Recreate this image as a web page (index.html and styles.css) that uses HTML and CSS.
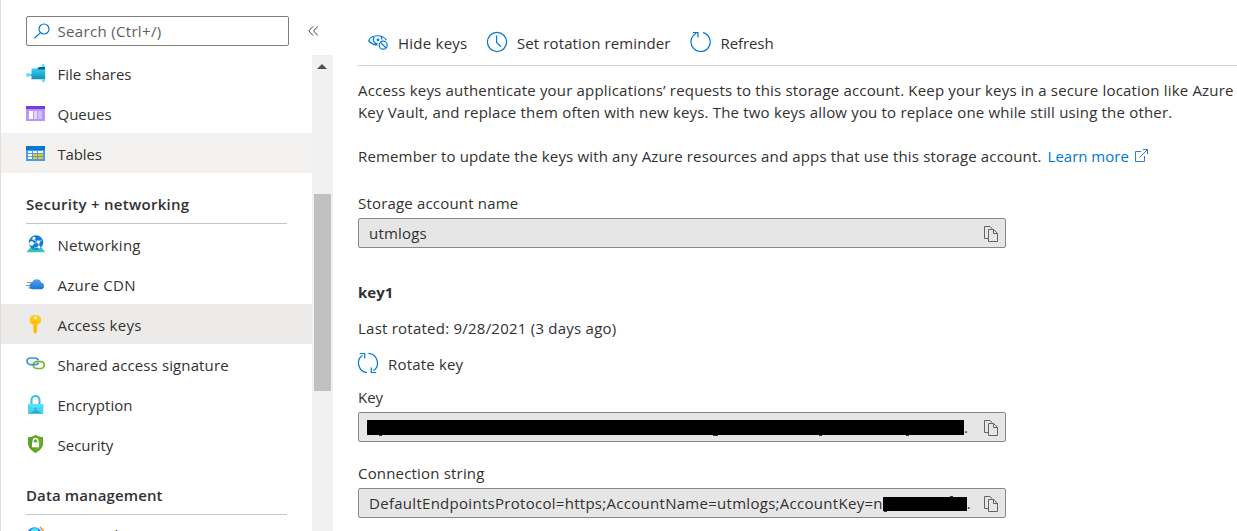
FILE: index.html
```html
<!DOCTYPE html>
<html lang="en">
<head>
<meta charset="utf-8">
<title>Access keys</title>
<link rel="stylesheet" href="styles.css">
</head>
<body>
<svg class="defs" width="0" height="0" aria-hidden="true">
  <defs>
    <linearGradient id="cloud" x1="0" y1="0" x2="0" y2="1"><stop offset="0" stop-color="#5ea0ef"/><stop offset="1" stop-color="#0f78d4"/></linearGradient>
    <linearGradient id="folder" x1="0" y1="0" x2="0" y2="1"><stop offset="0" stop-color="#32d4f5"/><stop offset="1" stop-color="#198ab3"/></linearGradient>
    <symbol id="copy" viewBox="0 0 14 16"><path d="M4.500 12.500h-4V.5h5.300l2.400 2.200M4.500 3.500h5.200l3.800 3.800v8.200h-9zM9.500 3.500v4h4" fill="none" stroke="#66635f"/></symbol>
  </defs>
</svg>
<div class="app">
  <aside class="sidebar">
    <div class="search-row">
      <div class="search">
        <svg width="16" height="16" viewBox="0 0 16 16" fill="none" stroke="#0078d4" stroke-width="1.200"><circle cx="10" cy="6" r="5"/><path d="M6.400 9.600L.5 15.200"/></svg>
        <span class="t-search">Search (Ctrl+/)</span>
      </div>
      <svg class="collapse" width="11" height="10" viewBox="0 0 11 10" fill="none" stroke="#444" stroke-width="1"><path d="M5 .4L.8 4.900 5 9.500M9.800.4L5.600 4.900l4.200 4.600"/></svg>
    </div>
    <div class="scroller">
      <nav class="menu">
        <a class="item"><svg width="20" height="20" viewBox="0 0 20 20"><path d="M2 12h5M14 7l4-5M15 14l3 3" stroke="#0078d4"/><path d="M11 6l2-2h6v5h-8z" fill="#0a5ea8"/><path d="M5.500 5.500h5l1.500 1h7.200v9.800H5.500z" fill="url(#folder)"/><g fill="#50e6ff"><circle cx="2" cy="12" r="1.900"/><circle cx="17.200" cy="2.500" r="1.500"/><circle cx="17.500" cy="17.500" r="1.700"/></g></svg><span>File shares</span></a>
        <a class="item"><svg width="20" height="20" viewBox="0 0 20 20"><path d="M0 3h19v15H0z" fill="#b796f9"/><path d="M0 3h19v3H0z" fill="#773adc"/><path d="M3 8h4v8H3z" fill="#fff"/><path d="M8 8h3v8H8z" fill="#e5d7fd"/><path d="M12 8h4v8h-4z" fill="#d3bffc"/></svg><span>Queues</span></a>
        <a class="item hover"><svg width="20" height="20" viewBox="0 0 20 20"><path d="M0 3h19v15H0z" fill="#4a9ae9"/><path d="M0 3h19v4H0z" fill="#0078d4"/><path d="M2 8h4v2H2zM7 8h4v2H7zM12 8h5v2h-5zM2 11h4v2H2zM2 14h4v2H2z" fill="#fff"/><path d="M7 11h4v2H7zM12 11h5v2h-5zM7 14h4v2H7zM12 14h5v2h-5z" fill="#f2c80f"/></svg><span class="tighter">Tables</span></a>
        <h2 class="group"><span class="t-sec">Security + networking</span></h2>
        <a class="item"><svg width="20" height="20" viewBox="0 0 20 20"><path d="M4 14h12l3.200 4.200H.3z" fill="#32c8ae"/><circle cx="10" cy="8.600" r="7.300" fill="#137ad6"/><path d="M5.500 5l7 3 3.500-2M6 10l6.500-2 .5 6M8 14l5-1" fill="none" stroke="#8cc8f5"/><g fill="#fff"><circle cx="5.500" cy="9.500" r="2.300"/><circle cx="12.500" cy="8" r="1.700"/><circle cx="13" cy="13" r="1.500"/><circle cx="8" cy="4.200" r="1.500"/></g></svg><span class="wide">Networking</span></a>
        <a class="item"><svg width="20" height="20" viewBox="0 0 20 20"><path d="M1 8.500h8M0 11.500h8M2 14h8" stroke="#9b9b9b" stroke-width="1.200"/><path d="M6.500 15.300a3.300 3.300 0 0 1-.5-6.500 4.800 4.800 0 0 1 9.200-.2 3.500 3.500 0 0 1 .6 6.700z" fill="url(#cloud)"/></svg><span class="wider">Azure CDN</span></a>
        <a class="item selected"><svg width="20" height="20" viewBox="0 0 20 20"><path d="M9.300 1C6 1 3.500 3 3.500 6.300c0 2.200 1.200 3.600 3.700 4.400v7l2 2 2-2v-1.500l-.8-1 .8-1v-3.500c2.800-.8 4-2.300 4-4.400C15.200 3 12.600 1 9.300 1z" fill="#ffca10"/><path d="M9.300 10.500v8.800" stroke="#f6a50a"/><path d="M6 8.300h6.800" stroke="#f9ad08"/><circle cx="9.300" cy="3.800" r="1.600" fill="#ecebea"/></svg><span class="wide">Access keys</span></a>
        <a class="item"><svg width="20" height="20" viewBox="0 0 20 20" fill="none" stroke-width="1.700"><rect x="7.300" y="7.700" width="11" height="6.800" rx="3.400" stroke="#76b82a"/><path d="M12.500 6.500C12 5 10.500 4 8.700 4H5C2.800 4 1 5.300 1 7.200s1.800 3.400 4 3.400h4c1.700 0 3-.7 3.500-1.700" stroke="#3c8ee5"/></svg><span class="slight">Shared access signature</span></a>
        <a class="item"><svg width="20" height="20" viewBox="0 0 20 20"><path d="M5.500 11V6a4 4 0 0 1 8 0v5" fill="none" stroke="#35bfe0" stroke-width="2"/><path d="M2 10h15.200v10H2z" fill="#50e6ff"/><path d="M2 19.500L9.500 13l7.700 6.500z" fill="#32a5d0"/><path d="M2 10.500l7.500 5L2 20zM17.200 10.500l-7.700 5 7.700 4.500z" fill="#46d5f2"/></svg><span>Encryption</span></a>
        <a class="item"><svg width="20" height="20" viewBox="0 0 20 20"><path d="M9.600.8C11.500 2.500 14 3 17 3.200v6.300c0 4.500-4 7.500-7.400 9.500C6 17 2 14 2 9.500V3.200C5.500 3 8 2.500 9.600.8z" fill="#5ba321"/><path d="M9.600 3c1.500 1 3.500 1.600 5.700 1.800V9.500c0 3.500-3 5.800-5.700 7.500z" fill="#6bb52a"/><path d="M7.200 8.500V6.800a2.300 2.300 0 0 1 4.600 0v1.700" fill="none" stroke="#fff" stroke-width="1.300"/><path d="M6 8.300h7v5H6z" fill="#fff"/></svg><span>Security</span></a>
        <h2 class="group"><span class="slight">Data management</span></h2>
        <a class="item last"><svg width="20" height="20" viewBox="0 0 20 20"><circle cx="8.500" cy="9.500" r="7.300" fill="#2b8be3"/><path d="M5 5a5 4 0 0 1 7-1v5H5z" fill="#50e6ff"/><path d="M14 2l3.500 4" stroke="#f78d1e" stroke-width="1.500"/></svg><span>Geo-replication</span></a>
      </nav>
      <div class="scrollbar"><i class="arrow"></i><i class="thumb"></i></div>
    </div>
  </aside>
  <main class="main">
    <div class="toolbar">
      <button class="cmd hide"><svg width="20" height="20" viewBox="0 0 20 20" fill="none" stroke="#0078d4" stroke-width="1.200"><path d="M.5 7.500C4 1.500 14 1 18.500 7.200M.5 7.500C3 10.500 6 12 9.500 12M6.500 3.800a4 4 0 0 0 3 6.800M13 3.700c.8 1 1 2 .8 3"/><circle cx="10" cy="6.800" r=".8" fill="#0078d4"/><circle cx="15.200" cy="12.200" r="4"/><path d="M12.500 9.300l5.500 5.700"/></svg><span class="wide">Hide keys</span></button>
      <button class="cmd"><svg width="22" height="22" viewBox="0 0 22 22" fill="none" stroke="#0078d4" stroke-width="1.200"><circle cx="11" cy="11" r="9.600"/><path d="M10.600 4.500v7l4.200 4"/></svg><span class="slight">Set rotation reminder</span></button>
      <button class="cmd"><svg width="22" height="22" viewBox="0 0 22 22" fill="none" stroke="#0078d4" stroke-width="1.200"><path d="M13 1.600a9.600 9.600 0 1 1-6.700.7M3 1.500h5v5"/></svg><span class="tight">Refresh</span></button>
    </div>
    <p class="copy first"><span class="body-text">Access keys authenticate your applications’ requests to this storage account. Keep your keys in a secure location like Azure</span><br><span class="body-text">Key Vault, and replace them often with new keys. The two keys allow you to replace one while still using the other.</span></p>
    <p class="copy second"><span class="remember">Remember to update the keys with any Azure resources and apps that use this storage account.</span><a class="link"><span>Learn more</span><svg width="13" height="13" viewBox="0 0 13 13" fill="none" stroke="#2b7cd6"><path d="M6 2.500H.5v10h9V7M4.500 8.500l8-8M8 .5h4.500V5"/></svg></a></p>
    <label class="label"><span class="body-text">Storage account name</span></label>
    <div class="field"><span class="value body-text">utmlogs</span><svg class="copy-icon" width="14" height="16"><use href="#copy"/></svg></div>
    <h3 class="key-title"><span>key1</span></h3>
    <p class="rotated"><span class="wide">Last rotated: 9/28/2021 (3 days ago)</span></p>
    <button class="cmd rotate"><svg width="22" height="22" viewBox="0 0 22 22" fill="none" stroke="#0078d4" stroke-width="1.200"><path d="M11.500 1.400a9.600 9.600 0 0 1 5 17.300M10 20.600A9.600 9.600 0 0 1 5.500 3.300M2.800 1.500h4.900v5M19.200 20.500h-4.900v-5"/></svg><span class="body-text">Rotate key</span></button>
    <label class="label key-label"><span>Key</span></label>
    <div class="field"><span class="redact long"></span><span class="dot">.</span><svg class="copy-icon" width="14" height="16"><use href="#copy"/></svg></div>
    <label class="label conn-label"><span class="body-text">Connection string</span></label>
    <div class="field"><span class="value conn">DefaultEndpointsProtocol=https;AccountName=utmlogs;AccountKey=n</span><span class="redact short"></span><span class="dot">.</span><svg class="copy-icon" width="14" height="16"><use href="#copy"/></svg></div>
  </main>
</div>
</body>
</html>
```
FILE: styles.css
```css
* { box-sizing: border-box; }
body { margin: 0; background: #fff; color: #323130; font: 15px/22px "Open Sans", "Noto Sans", sans-serif; }
h2, h3, p { margin: 0; }
svg { flex: none; display: block; }
span { white-space: nowrap; }
button { font: inherit; color: inherit; border: 0; background: none; padding: 0; }
.defs { position: absolute; }
.app { display: flex; width: 1237px; height: 531px; overflow: hidden; }

/* letter spacing */
.tighter { letter-spacing: -0.15px; }
.tight { letter-spacing: -0.1px; }
.slight { letter-spacing: 0.12px; }
.remember { letter-spacing: 0.157px; }
.body-text { letter-spacing: 0.182px; }
.wide { letter-spacing: 0.235px; }
.wider, .t-sec, .conn { letter-spacing: 0.285px; }
.t-search { letter-spacing: 0.33px; }

/* sidebar */
.sidebar { display: flex; flex-direction: column; width: 333px; flex: none; border-left: 1px solid #e1e0df; }
.search-row { display: flex; height: 55px; padding: 16px 0 0 25px; flex: none; }
.search { display: flex; align-items: center; gap: 7.5px; width: 263px; height: 30px; padding-left: 7px; border: 1px solid #7f7d7b; border-radius: 2px; color: #605e5c; }
.collapse { margin: 10px 0 0 19px; }
.scroller { display: flex; height: 476px; overflow: hidden; }
.menu { width: 311px; margin-top: -2px; flex: none; }
.item { display: flex; align-items: center; gap: 11.5px; height: 40px; padding: 2px 0 0 25px; }
.item svg { margin-top: -2px; }
.last span { margin-top: -2px; }
.hover { background: #f3f2f1; }
.selected { background: #edebe9; }
.group { height: 51px; padding-top: 20px; margin: 0 25px; border-bottom: 1px solid #c8c6c4; font-size: 15px; font-weight: 600; }
.scrollbar { width: 21px; background: #f1f1f1; flex: none; }
.arrow { display: block; margin: 9px 0 0 5px; width: 0; border: 5px solid transparent; border-top: 0; border-bottom: 5px solid #505050; }
.thumb { display: block; width: 17px; height: 197px; margin: 125px 0 0 2px; background: #c1c1c1; }

/* main pane */
.main { flex: 1; padding: 0 0 0 25px; min-width: 0; }
.toolbar { display: flex; height: 66px; padding: 31px 0 0 10px; border-bottom: 1px solid #d2d0ce; }
.cmd { display: flex; align-items: center; gap: 9px; height: 22px; }
.toolbar .cmd { margin-right: 19px; }
.toolbar .hide { gap: 10px; margin-right: 18.5px; }
.toolbar .hide svg { margin-top: 1px; }
.toolbar .cmd span { margin-top: 1px; }
.copy { height: 44px; }
.first { margin-top: 13px; }
.second { display: flex; height: 22px; margin-top: 22px; }
.link { display: flex; color: #0078d4; margin-left: 6px; }
.link svg { margin: 4px 0 0 6px; }
.label { display: block; height: 22px; margin-top: 25px; }
.field { display: flex; align-items: center; width: 648px; height: 30px; margin-top: 4px; padding: 0 7px 0 10px; border: 1px solid #8a8886; border-radius: 2px; background: #e6e6e6; }
.value { flex: none; }
.copy-icon { margin: 2px 0 0 auto; }
.key-title { height: 22px; margin-top: 33px; font-size: 15px; font-weight: 700; }
.rotated { height: 22px; margin-top: 14px; }
.rotate { margin-top: 13px; margin-left: -1px; }
.rotate span { margin-top: 2px; }
.key-label { margin-top: 12px; }
.conn-label { margin-top: 20px; }

/* redaction bars, with the slivers of covered letters that show past the edge */
.redact { background: #000; flex: none; position: relative; }
.long { width: 597px; height: 15px; margin-left: -2px; margin-top: 1px; }
.short { width: 84px; height: 14px; margin-top: 2px; }
.redact::after { content: ""; position: absolute; left: 12px; top: 100%; width: 3px; height: 1px; background: #323130; }
.long::after { box-shadow: 334px 0 #323130, 336px 0 #323130, 440px 0 #323130, 527px 0 #323130; }
.short::after { left: 1px; box-shadow: 66px -15px #323130; }
.dot { width: 5px; }
```
